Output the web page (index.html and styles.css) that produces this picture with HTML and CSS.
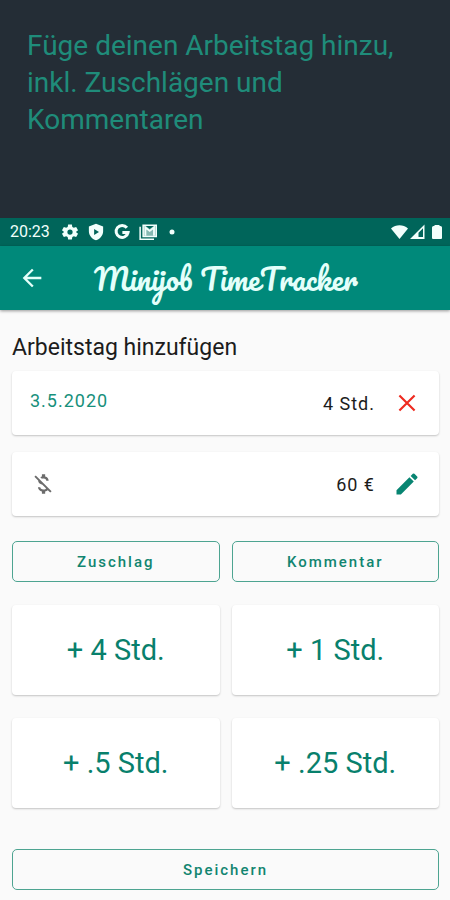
FILE: index.html
```html
<!DOCTYPE html>
<html lang="de">
<head>
<meta charset="utf-8">
<meta name="viewport" content="width=device-width, initial-scale=1">
<title>Minijob TimeTracker</title>
<link rel="stylesheet" href="styles.css">
</head>
<body>
<header class="promo">
  <p class="promo-text">Füge deinen Arbeitstag hinzu, inkl. Zuschlägen und Kommentaren</p>
</header>
<div class="status-bar">
  <span class="clock">20:23</span>
  <div class="status-icons">
    <svg width="18" height="18" viewBox="0 0 24 24" aria-hidden="true"><path fill="currentColor" d="M9.500 2h5l.6 3.200 2 1.200 3.100-1.100 2.500 4.300-2.500 2.200v.4l2.500 2.200-2.500 4.300-3.100-1.100-2 1.200-.6 3.200h-5l-.6-3.200-2-1.200-3.100 1.100-2.500-4.300 2.500-2.200v-.4L1.300 9.600l2.500-4.300 3.100 1.100 2-1.200zM12 8.500a3.500 3.500 0 1 0 0 7 3.500 3.500 0 0 0 0-7z"/></svg>
    <svg width="18" height="18" viewBox="0 0 24 24" aria-hidden="true"><path fill="currentColor" fill-rule="evenodd" d="M12 1 2.500 4.500V11c0 5.500 4 10.400 9.500 12 5.500-1.600 9.500-6.500 9.500-12V4.500zM9.500 8l6.500 4-6.500 4z"/></svg>
    <svg width="18" height="18" viewBox="0 0 24 24" aria-hidden="true"><path fill="none" stroke="currentColor" stroke-width="4" d="M18.500 6.300A8 8 0 1 0 20 12.800h-7.500"/></svg>
    <svg width="18" height="18" viewBox="0 0 24 24" aria-hidden="true"><path fill="none" stroke="currentColor" stroke-width="2" d="M1.500 5v16.500H20"/><path fill="currentColor" fill-opacity=".55" stroke="currentColor" stroke-width="2" d="M5.500 3H23v15H5.500z"/><path fill="#00655a" d="m9 4 5.300 4L19.500 4z"/><path fill="none" stroke="currentColor" stroke-width="2.500" d="M8.500 17V6l5.800 4.500L20 6v11"/></svg>
    <svg width="18" height="18" viewBox="0 0 18 18" aria-hidden="true"><circle cx="7" cy="9" r="2.500" fill="currentColor"/></svg>
  </div>
  <div class="signal-icons">
    <svg width="17" height="16" viewBox="0 0 17 16" aria-hidden="true"><path fill="currentColor" d="M0 4.500C5 .2 12 .2 17 4.500L8.500 15z"/></svg>
    <svg width="15" height="16" viewBox="0 0 15 16" aria-hidden="true"><path fill="currentColor" fill-rule="evenodd" d="M0 15 14.500.5V15zM8.500 8.700V13H13V4.200z"/></svg>
    <svg class="battery" width="10" height="16" viewBox="0 0 10 16" aria-hidden="true"><path fill="currentColor" d="M2.500 1h5v1h1q1.500 0 1.500 1.500V14q0 1-1 1H1q-1 0-1-1V3.500Q0 2 1.500 2h1z"/></svg>
  </div>
</div>
<nav class="app-bar">
  <button class="icon-button" type="button" aria-label="Zurück">
    <svg width="28" height="28" viewBox="0 0 24 24" aria-hidden="true"><path fill="currentColor" d="M20 11H7.830l5.590-5.590L12 4l-8 8 8 8 1.410-1.410L7.830 13H20z"/></svg>
  </button>
  <span class="brand">Minijob TimeTracker</span>
</nav>
<main class="content">
  <h1 class="heading">Arbeitstag hinzufügen</h1>
  <section class="card entry">
    <a class="date" href="#datum">3.5.2020</a>
    <span class="value">4 Std.</span>
    <button class="icon-button delete" type="button" aria-label="Löschen">
      <svg width="26" height="26" viewBox="0 0 24 24" aria-hidden="true"><path fill="none" stroke="currentColor" stroke-width="2" d="m5 5 14 14M19 5 5 19"/></svg>
    </button>
  </section>
  <section class="card entry">
    <svg class="no-money" width="26" height="26" viewBox="0 0 24 24" aria-hidden="true"><path fill="currentColor" d="M12.500 6.900c1.780 0 2.440.85 2.500 2.100h2.210c-.07-1.720-1.120-3.300-3.210-3.810V3h-3v2.160c-.53.12-1.030.3-1.480.54l1.470 1.470c.41-.17.91-.27 1.510-.27zM5.330 4.060 4.060 5.330 7.500 8.770c0 2.080 1.560 3.210 3.910 3.910l3.510 3.510c-.34.480-1.050.91-2.420.91-2.060 0-2.870-.92-2.980-2.100h-2.200c.12 2.190 1.760 3.420 3.680 3.830V21h3v-2.150c.96-.18 1.820-.55 2.450-1.120l2.220 2.220 1.270-1.270z"/></svg>
    <span class="value">60 €</span>
    <button class="icon-button edit" type="button" aria-label="Bearbeiten">
      <svg width="28" height="28" viewBox="0 0 24 24" aria-hidden="true"><path fill="currentColor" d="M3 17.250V21h3.750L17.810 9.940l-3.750-3.750zM20.710 7.040a1 1 0 0 0 0-1.410l-2.340-2.340a1 1 0 0 0-1.410 0l-1.830 1.830 3.750 3.750z"/></svg>
    </button>
  </section>
  <div class="grid">
    <button class="outlined" type="button">Zuschlag</button>
    <button class="outlined" type="button">Kommentar</button>
    <button class="card add" type="button">+ 4 Std.</button>
    <button class="card add" type="button">+ 1 Std.</button>
    <button class="card add" type="button">+ .5 Std.</button>
    <button class="card add" type="button">+ .25 Std.</button>
  </div>
  <button class="outlined save" type="button">Speichern</button>
</main>
</body>
</html>
```
FILE: styles.css
```css
* {
  box-sizing: border-box;
}

body {
  margin: 0;
  background: #fafafa;
  color: #1c1c1c;
  font-family: Roboto, "Liberation Sans", sans-serif;
}

svg {
  display: block;
  flex: none;
}

button {
  font-family: inherit;
  cursor: pointer;
}

.promo {
  padding: 27px 27px 80px;
  background: #242d36;
  color: #1f8c7a;
}

.promo-text {
  margin: 0;
  font-size: 28px;
  line-height: 37px;
}

.status-bar {
  display: flex;
  align-items: center;
  height: 28px;
  padding: 0 8px 0 10px;
  background: #00655a;
  color: #f2fffc;
}

.clock {
  font-size: 16px;
  line-height: 28px;
}

.status-icons {
  display: flex;
  gap: 8px;
  margin-left: 11px;
}

.signal-icons {
  display: flex;
  gap: 2px;
  margin-left: auto;
}

.battery {
  margin-left: 5px;
}

.app-bar {
  display: flex;
  align-items: center;
  height: 64px;
  padding: 0 12px;
  background: #00897a;
  color: #e4fffa;
  box-shadow: 0 1px 3px #00000066;
}

.icon-button {
  display: grid;
  place-items: center;
  width: 40px;
  height: 40px;
  padding: 0;
  border: 0;
  background: none;
  color: inherit;
}

.brand {
  margin-left: 42px;
  font-family: Pacifico, Lato, cursive;
  font-size: 29px;
  font-weight: 400;
}

.content {
  padding: 22px 11px 10px 12px;
}

.heading {
  margin: 0 0 7px;
  font-size: 23px;
  font-weight: 400;
  line-height: 32px;
}

.card {
  border: 0;
  border-radius: 4px;
  background: #fff;
  box-shadow: 0 1px 2px #00000038;
}

.entry {
  display: flex;
  align-items: center;
  height: 64px;
  margin-bottom: 17px;
  padding: 0 12px 0 18px;
}

.date {
  margin-bottom: 6px;
  color: #17907b;
  font-size: 18px;
  letter-spacing: 1px;
  text-decoration: none;
}

.value {
  margin-left: auto;
  margin-right: 12px;
  font-size: 18px;
  letter-spacing: 1px;
}

.delete {
  color: #ee2b20;
}

.edit {
  color: #088572;
}

.no-money {
  color: #6c6c6c;
}

.grid {
  display: grid;
  grid-template-columns: 1fr 1fr;
  gap: 23px 12px;
  padding-top: 8px;
}

.outlined {
  height: 41px;
  border: 1px solid #4da491;
  border-radius: 5px;
  background: transparent;
  color: #118570;
  font-size: 15px;
  font-weight: 500;
  letter-spacing: 2px;
}

.add {
  height: 90px;
  color: #08806c;
  font-size: 29px;
}

.save {
  width: 100%;
  margin-top: 41px;
}
```
